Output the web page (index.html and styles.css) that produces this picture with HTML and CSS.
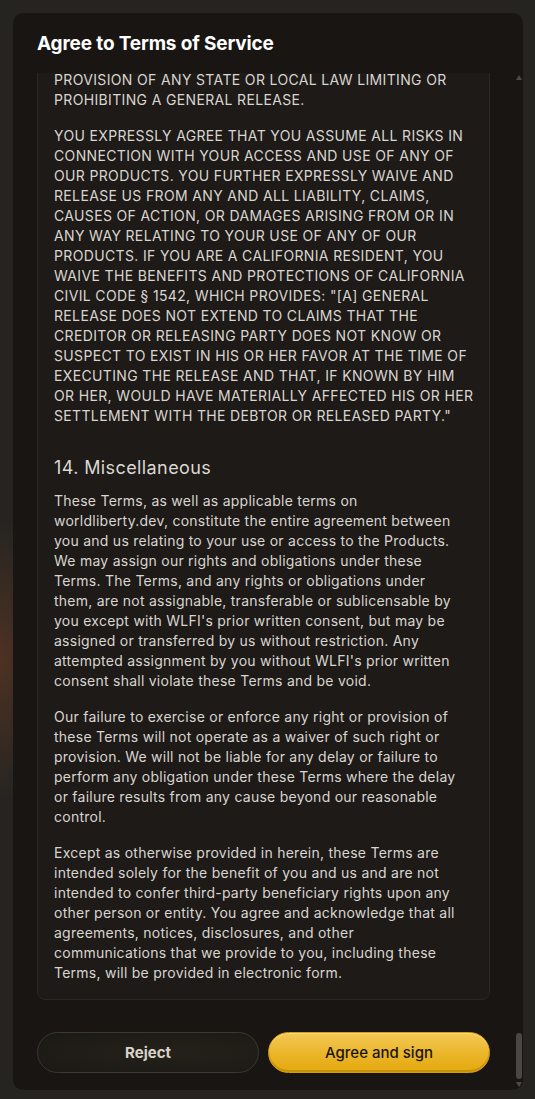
FILE: index.html
```html
<!DOCTYPE html>
<html lang="en">
<head>
<meta charset="utf-8">
<title>Agree to Terms of Service</title>
<link rel="stylesheet" href="styles.css">
</head>
<body>
<div class="modal">
  <div class="modal-header">
    <h1 class="modal-title">Agree to Terms of Service</h1>
  </div>
  <div class="modal-body">
    <div class="terms-box">
      <p class="caps">PROVISION OF ANY STATE OR LOCAL LAW LIMITING OR<br>
PROHIBITING A GENERAL RELEASE.</p>
      <p class="caps">YOU EXPRESSLY AGREE THAT YOU ASSUME ALL RISKS IN<br>
CONNECTION WITH YOUR ACCESS AND USE OF ANY OF<br>
OUR PRODUCTS. YOU FURTHER EXPRESSLY WAIVE AND<br>
RELEASE US FROM ANY AND ALL LIABILITY, CLAIMS,<br>
CAUSES OF ACTION, OR DAMAGES ARISING FROM OR IN<br>
ANY WAY RELATING TO YOUR USE OF ANY OF OUR<br>
PRODUCTS. IF YOU ARE A CALIFORNIA RESIDENT, YOU<br>
WAIVE THE BENEFITS AND PROTECTIONS OF CALIFORNIA<br>
CIVIL CODE § 1542, WHICH PROVIDES: "[A] GENERAL<br>
RELEASE DOES NOT EXTEND TO CLAIMS THAT THE<br>
CREDITOR OR RELEASING PARTY DOES NOT KNOW OR<br>
SUSPECT TO EXIST IN HIS OR HER FAVOR AT THE TIME OF<br>
EXECUTING THE RELEASE AND THAT, IF KNOWN BY HIM<br>
OR HER, WOULD HAVE MATERIALLY AFFECTED HIS OR HER<br>
SETTLEMENT WITH THE DEBTOR OR RELEASED PARTY."</p>
      <h2 class="section-title">14. Miscellaneous</h2>
      <p>These Terms, as well as applicable terms on<br>
worldliberty.dev, constitute the entire agreement between<br>
you and us relating to your use or access to the Products.<br>
We may assign our rights and obligations under these<br>
Terms. The Terms, and any rights or obligations under<br>
them, are not assignable, transferable or sublicensable by<br>
you except with WLFI's prior written consent, but may be<br>
assigned or transferred by us without restriction. Any<br>
attempted assignment by you without WLFI's prior written<br>
consent shall violate these Terms and be void.</p>
      <p>Our failure to exercise or enforce any right or provision of<br>
these Terms will not operate as a waiver of such right or<br>
provision. We will not be liable for any delay or failure to<br>
perform any obligation under these Terms where the delay<br>
or failure results from any cause beyond our reasonable<br>
control.</p>
      <p>Except as otherwise provided in herein, these Terms are<br>
intended solely for the benefit of you and us and are not<br>
intended to confer third-party beneficiary rights upon any<br>
other person or entity. You agree and acknowledge that all<br>
agreements, notices, disclosures, and other<br>
communications that we provide to you, including these<br>
Terms, will be provided in electronic form.</p>
    </div>
    <div class="actions">
      <button class="btn btn-reject" type="button">Reject</button>
      <button class="btn btn-agree" type="button">Agree and sign</button>
    </div>
  </div>
  <div class="scrollbar" aria-hidden="true">
    <span class="scroll-arrow up"></span>
    <span class="scroll-track"><span class="scroll-thumb"></span></span>
    <span class="scroll-arrow down"></span>
  </div>
</div>
</body>
</html>
```
FILE: styles.css
```css
* { box-sizing: border-box; }

html, body {
  margin: 0;
  height: 1099px;
}

body {
  background:
    radial-gradient(ellipse 60px 140px at 0px 660px, rgba(110, 62, 36, 0.55), rgba(110, 62, 36, 0) 100%),
    #262421;
  padding: 13px 12px 9px 13px;
  font-family: Inter, "Open Sans", sans-serif;
  overflow: hidden;
}

.modal {
  position: relative;
  height: 1077px;
  background: #181512;
  border-radius: 10px;
  display: flex;
  flex-direction: column;
  overflow: hidden;
}

.modal-header {
  height: 60px;
  flex: none;
  display: flex;
  align-items: center;
  padding: 0 24px;
}

.modal-title {
  margin: 0;
  font-size: 19px;
  font-weight: 700;
  letter-spacing: -0.15px;
  color: #ffffff;
}

.modal-body {
  flex: 1;
  min-height: 0;
  overflow: hidden;
  display: flex;
  flex-direction: column;
  justify-content: flex-end;
  padding: 0 33px 17px 24px;
}

.terms-box {
  flex: none;
  background: #1d1a17;
  border: 1px solid #2a2724;
  border-radius: 8px;
  padding: 16px 14px 16px 16px;
  color: #d9d5d0;
  font-size: 14px;
  line-height: 20px;
  letter-spacing: 0.25px;
}

.terms-box p {
  margin: 0 0 16px;
  white-space: nowrap;
}

.terms-box p:last-child {
  margin-bottom: 0;
}

.terms-box .caps {
  letter-spacing: 0.35px;
}

.section-title {
  margin: 29px 0 10px;
  font-size: 18px;
  line-height: 26px;
  font-weight: 400;
  letter-spacing: 0.4px;
  color: #dcd8d3;
}

.actions {
  flex: none;
  display: flex;
  gap: 9px;
  margin-top: 32px;
}

.btn {
  flex: 1;
  height: 41px;
  border-radius: 21px;
  font-family: inherit;
  font-size: 15px;
  cursor: pointer;
}

.btn-reject {
  background: radial-gradient(ellipse at 60% 50%, #24211a 0%, #1b1915 100%);
  border: 1px solid #3b382f;
  color: #d8d3cb;
  font-weight: 700;
}

.btn-agree {
  background: linear-gradient(180deg, #f2c856 0%, #ebb528 55%, #e4a90f 100%);
  border: 1px solid #d49d14;
  box-shadow: inset 0 -2px 0 #c9900a, inset 0 1px 0 rgba(255, 235, 160, 0.6);
  color: #1a1510;
  font-weight: 500;
}

.scrollbar {
  position: absolute;
  right: 0;
  top: 60px;
  bottom: 0;
  width: 9px;
  display: flex;
  flex-direction: column;
  align-items: center;
}

.scroll-arrow {
  flex: none;
  width: 0;
  height: 0;
  border-left: 3px solid transparent;
  border-right: 3px solid transparent;
}

.scroll-arrow.up {
  margin-top: 2px;
  border-bottom: 5px solid #4e4b47;
}

.scroll-arrow.down {
  margin-bottom: 3px;
  border-top: 5px solid #4e4b47;
}

.scroll-track {
  flex: 1;
  width: 100%;
  display: flex;
  flex-direction: column;
  justify-content: flex-end;
  align-items: center;
  padding-bottom: 3px;
}

.scroll-thumb {
  width: 6px;
  height: 46px;
  border-radius: 3px;
  background: #4a4744;
}
```
